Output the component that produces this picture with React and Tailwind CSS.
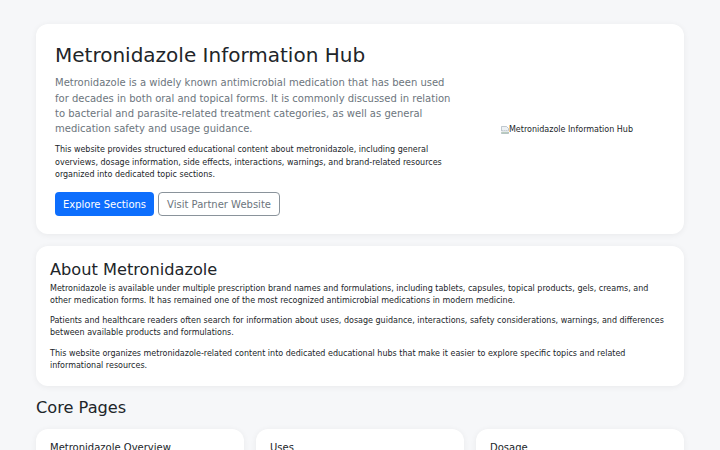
const corePages = ["Metronidazole Overview", "Uses", "Dosage"];

function BrokenImage({ alt }) {
	return (
		<span className="inline-flex items-center text-[8px] leading-[12px] text-[#212529]">
			<svg className="size-[8px] shrink-0" viewBox="0 0 16 16" fill="none">
				<path d="M1 1h10l4 4v4l-2 1-2-1-2 1-2-1-2 1-2-1-2 1V1z" fill="#eef2f5" stroke="#9aa7b3" strokeWidth="1.2" />
				<path d="M1 13l2-1 2 1 2-1 2 1 2-1 2 1 2-1v3H1z" fill="#bfdcb6" stroke="#9aa7b3" strokeWidth="1.2" />
			</svg>
			{alt}
		</span>
	);
}

export default function App() {
	return (
		<div
			className="min-h-screen bg-[#f6f7f9] text-[#212529] px-9 pt-6 pb-10"
			style={{ fontFamily: '"DejaVu Sans", sans-serif' }}
		>
			<section className="bg-white rounded-[12px] shadow-[0_1px_6px_rgba(0,0,0,0.06)] px-[19px] pt-[19px] pb-[18px] flex items-center">
				<div className="w-[400px] shrink-0">
					<h1 className="text-[20px] leading-[24.3px] font-normal mb-[8px]">
						Metronidazole Information Hub
					</h1>
					<p className="text-[10px] leading-[15.2px] text-[#6c757d] mb-[8px]">
						Metronidazole is a widely known antimicrobial medication that has been used
						for decades in both oral and topical forms. It is commonly discussed in relation
						to bacterial and parasite-related treatment categories, as well as general
						medication safety and usage guidance.
					</p>
					<p className="text-[8px] leading-[12.4px] mb-[11px]">
						This website provides structured educational content about metronidazole, including general
						overviews, dosage information, side effects, interactions, warnings, and brand-related resources
						organized into dedicated topic sections.
					</p>
					<div className="flex gap-[4px]">
						<button className="h-[24px] px-[8px] rounded-[4px] bg-[#0d6efd] text-white text-[10px]">
							Explore Sections
						</button>
						<button className="h-[24px] px-[8px] rounded-[4px] border border-[#8a939b] text-[#6c757d] text-[10px]">
							Visit Partner Website
						</button>
					</div>
				</div>
				<div className="flex-1 flex justify-center pl-[14px]">
					<BrokenImage alt="Metronidazole Information Hub" />
				</div>
			</section>

			<section className="mt-[12px] bg-white rounded-[12px] shadow-[0_1px_6px_rgba(0,0,0,0.06)] px-[14px] pt-[14px] pb-[14px]">
				<h2 className="text-[16.2px] leading-[19.4px] mb-[3px]">About Metronidazole</h2>
				<div className="text-[8px] leading-[12.2px] space-y-[8px]">
					<p>
						Metronidazole is available under multiple prescription brand names and formulations, including tablets, capsules, topical products, gels, creams, and
						other medication forms. It has remained one of the most recognized antimicrobial medications in modern medicine.
					</p>
					<p>
						Patients and healthcare readers often search for information about uses, dosage guidance, interactions, safety considerations, warnings, and differences
						between available products and formulations.
					</p>
					<p>
						This website organizes metronidazole-related content into dedicated educational hubs that make it easier to explore specific topics and related
						informational resources.
					</p>
				</div>
			</section>

			<h2 className="mt-[12px] text-[16.2px] leading-[19.4px] mb-[12px]">Core Pages</h2>
			<div className="grid grid-cols-3 gap-[12px]">
				{corePages.map((title) => (
					<div
						key={title}
						className="bg-white rounded-[12px] shadow-[0_1px_6px_rgba(0,0,0,0.06)] px-[14px] pt-[13px] pb-[40px]"
					>
						<h3 className="text-[10px] leading-[12.2px]">{title}</h3>
					</div>
				))}
			</div>
		</div>
	);
}
